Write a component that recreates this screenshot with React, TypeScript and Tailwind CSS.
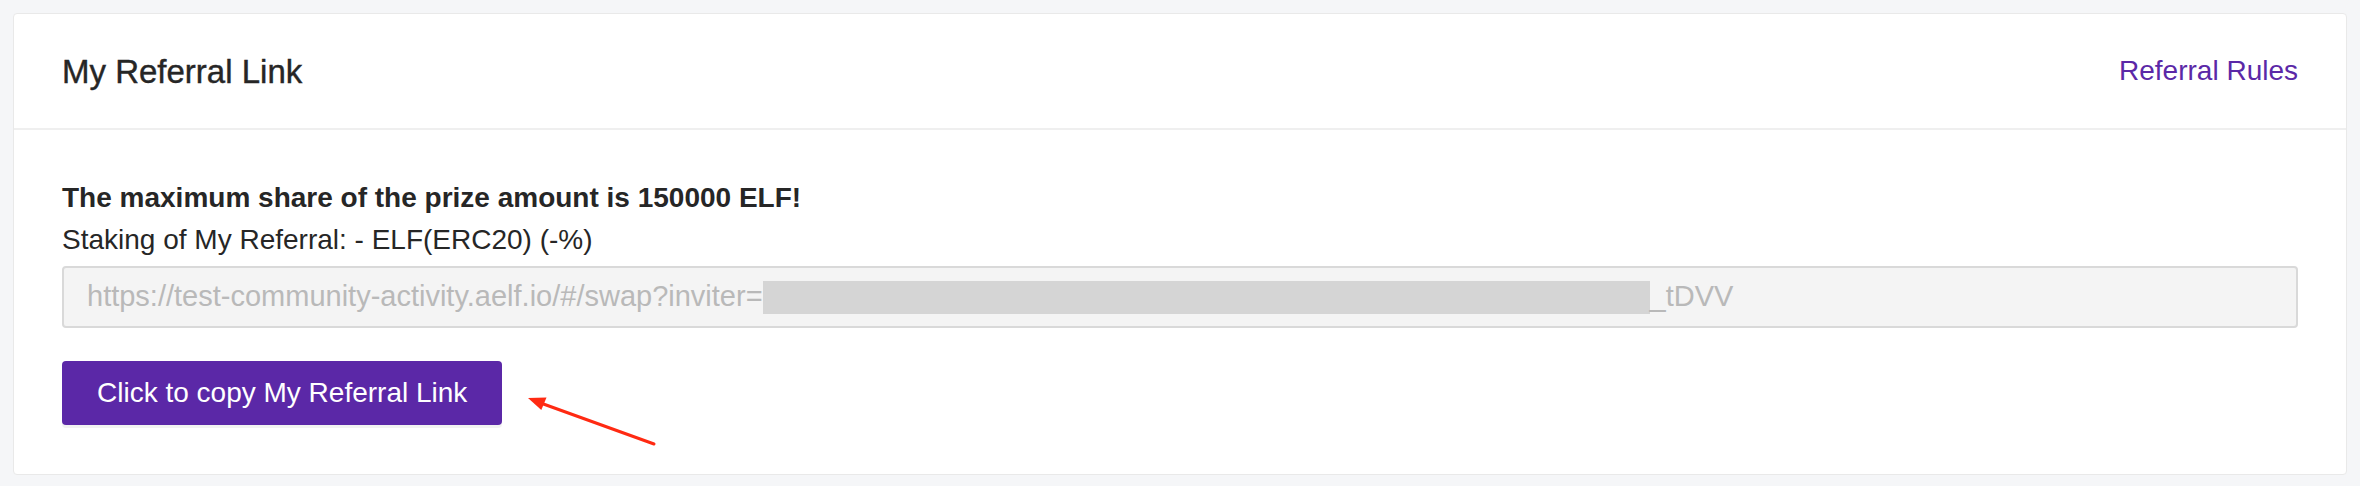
import React from 'react';

const INVITE_PREFIX = 'https://test-community-activity.aelf.io/#/swap?inviter=';
const INVITE_SUFFIX = '_tDVV';

function PointerArrow() {
  // red annotation arrow pointing back at the copy button
  return (
    <svg
      className="pointer-events-none absolute left-[458px] top-[28px]"
      width="140"
      height="62"
      viewBox="0 0 140 62"
      fill="none"
    >
      <line x1="22" y1="14.5" x2="134" y2="55" stroke="#ff2a12" strokeWidth="3" strokeLinecap="round" />
      <polygon points="8,9 26.5,8.6 21.3,21" fill="#ff2a12" />
    </svg>
  );
}

export default function App() {
  return (
    <main className="min-h-screen bg-[#f5f6f8] p-[13px] font-['Liberation_Sans',Arial,sans-serif] text-[#262626]">
      <section className="rounded border border-[#e9e9e9] bg-white">
        <header className="flex h-[116px] items-center justify-between border-b-2 border-[#efefef] px-12">
          <h2 className="text-[33px] font-medium leading-none text-[#262626] [-webkit-text-stroke:0.4px_#262626]">
            My Referral Link
          </h2>
          <a href="#" className="text-[28px] leading-none text-[#5b28a7]">
            Referral Rules
          </a>
        </header>

        <div className="px-12 pb-[49px] pt-[47px]">
          <p className="text-[28px] font-bold leading-[42px]">The maximum share of the prize amount is 150000 ELF!</p>
          <p className="text-[28px] leading-[42px]">Staking of My Referral: - ELF(ERC20) (-%)</p>

          <div className="mt-[5px] flex h-[62px] items-center overflow-hidden whitespace-nowrap rounded border-2 border-[#d9d9d9] bg-[#f4f4f4] px-[23px] text-[29px] text-[#b9b9b9]">
            <span>{INVITE_PREFIX}</span>
            <span className="inline-block h-[33px] w-[887px] bg-[#d5d5d5]" />
            <span>{INVITE_SUFFIX}</span>
          </div>

          <div className="relative mt-[33px]">
            <button
              type="button"
              className="h-[64px] rounded bg-[#5b28a7] px-[35px] text-[28px] text-white shadow-[0_3px_0_rgba(0,0,0,0.05)]"
            >
              Click to copy My Referral Link
            </button>
            <PointerArrow />
          </div>
        </div>
      </section>
    </main>
  );
}
